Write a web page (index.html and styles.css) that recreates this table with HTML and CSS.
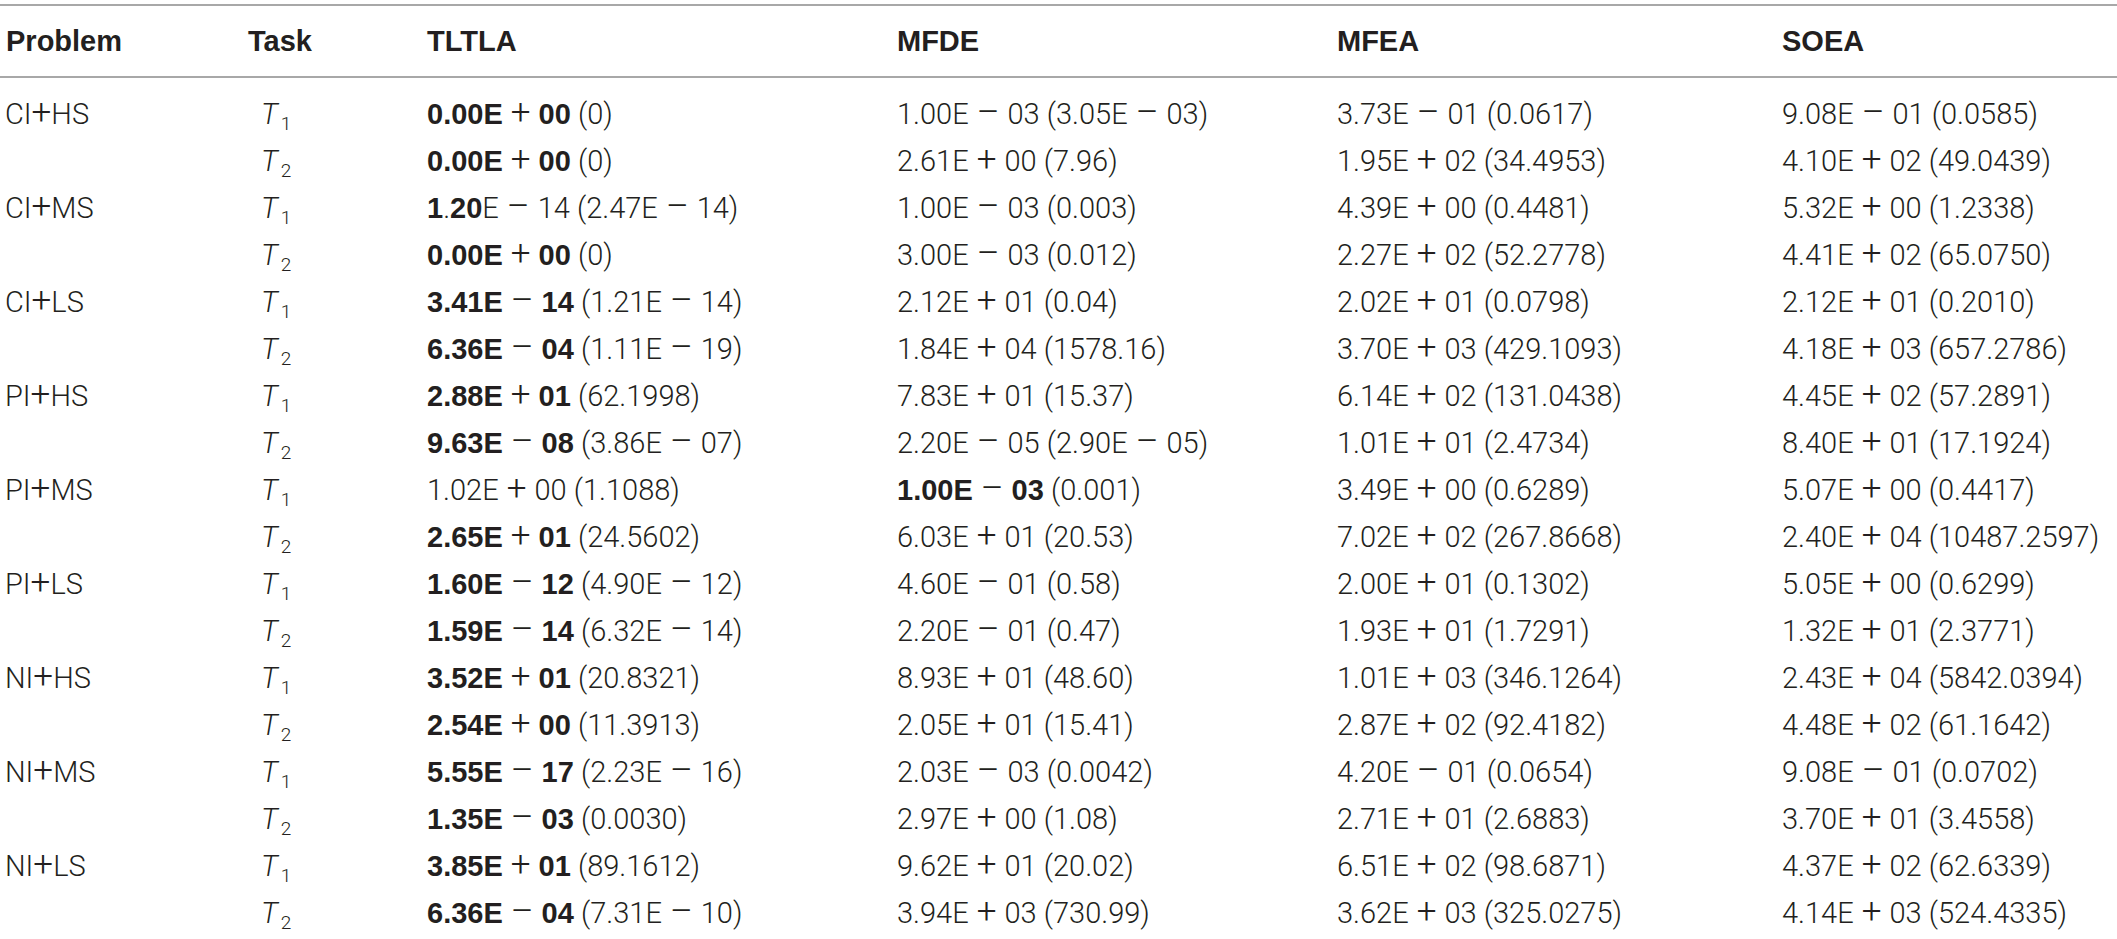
FILE: index.html
```html
<!DOCTYPE html>
<html>
<head>
<meta charset="utf-8">
<link rel="stylesheet" href="styles.css">
</head>
<body>
<table class="results">
<colgroup>
<col class="c-problem"><col class="c-task"><col class="c-tltla"><col class="c-mfde"><col class="c-mfea"><col class="c-soea">
</colgroup>
<thead>
<tr><th class="first">Problem</th><th>Task</th><th>TLTLA</th><th>MFDE</th><th>MFEA</th><th>SOEA</th></tr>
</thead>
<tbody>
<tr class="top">
<td class="first">CI<span class="plus">+</span>HS</td><td class="task"><i>T</i><sub>1</sub></td>
<td><b>0.00E</b><span class="op">+</span><b>00</b> (0)</td>
<td>1.00E<span class="op">–</span>03 (3.05E<span class="op">–</span>03)</td>
<td>3.73E<span class="op">–</span>01 (0.0617)</td>
<td>9.08E<span class="op">–</span>01 (0.0585)</td>
</tr>
<tr>
<td class="first"></td><td class="task"><i>T</i><sub>2</sub></td>
<td><b>0.00E</b><span class="op">+</span><b>00</b> (0)</td>
<td>2.61E<span class="op">+</span>00 (7.96)</td>
<td>1.95E<span class="op">+</span>02 (34.4953)</td>
<td>4.10E<span class="op">+</span>02 (49.0439)</td>
</tr>
<tr>
<td class="first">CI<span class="plus">+</span>MS</td><td class="task"><i>T</i><sub>1</sub></td>
<td><b>1</b>.<b>20</b>E<span class="op">–</span>14 (2.47E<span class="op">–</span>14)</td>
<td>1.00E<span class="op">–</span>03 (0.003)</td>
<td>4.39E<span class="op">+</span>00 (0.4481)</td>
<td>5.32E<span class="op">+</span>00 (1.2338)</td>
</tr>
<tr>
<td class="first"></td><td class="task"><i>T</i><sub>2</sub></td>
<td><b>0.00E</b><span class="op">+</span><b>00</b> (0)</td>
<td>3.00E<span class="op">–</span>03 (0.012)</td>
<td>2.27E<span class="op">+</span>02 (52.2778)</td>
<td>4.41E<span class="op">+</span>02 (65.0750)</td>
</tr>
<tr>
<td class="first">CI<span class="plus">+</span>LS</td><td class="task"><i>T</i><sub>1</sub></td>
<td><b>3.41E</b><span class="op">–</span><b>14</b> (1.21E<span class="op">–</span>14)</td>
<td>2.12E<span class="op">+</span>01 (0.04)</td>
<td>2.02E<span class="op">+</span>01 (0.0798)</td>
<td>2.12E<span class="op">+</span>01 (0.2010)</td>
</tr>
<tr>
<td class="first"></td><td class="task"><i>T</i><sub>2</sub></td>
<td><b>6.36E</b><span class="op">–</span><b>04</b> (1.11E<span class="op">–</span>19)</td>
<td>1.84E<span class="op">+</span>04 (1578.16)</td>
<td>3.70E<span class="op">+</span>03 (429.1093)</td>
<td>4.18E<span class="op">+</span>03 (657.2786)</td>
</tr>
<tr>
<td class="first">PI<span class="plus">+</span>HS</td><td class="task"><i>T</i><sub>1</sub></td>
<td><b>2.88E</b><span class="op">+</span><b>01</b> (62.1998)</td>
<td>7.83E<span class="op">+</span>01 (15.37)</td>
<td>6.14E<span class="op">+</span>02 (131.0438)</td>
<td>4.45E<span class="op">+</span>02 (57.2891)</td>
</tr>
<tr>
<td class="first"></td><td class="task"><i>T</i><sub>2</sub></td>
<td><b>9.63E</b><span class="op">–</span><b>08</b> (3.86E<span class="op">–</span>07)</td>
<td>2.20E<span class="op">–</span>05 (2.90E<span class="op">–</span>05)</td>
<td>1.01E<span class="op">+</span>01 (2.4734)</td>
<td>8.40E<span class="op">+</span>01 (17.1924)</td>
</tr>
<tr>
<td class="first">PI<span class="plus">+</span>MS</td><td class="task"><i>T</i><sub>1</sub></td>
<td>1.02E<span class="op">+</span>00 (1.1088)</td>
<td><b>1.00E</b><span class="op">–</span><b>03</b> (0.001)</td>
<td>3.49E<span class="op">+</span>00 (0.6289)</td>
<td>5.07E<span class="op">+</span>00 (0.4417)</td>
</tr>
<tr>
<td class="first"></td><td class="task"><i>T</i><sub>2</sub></td>
<td><b>2.65E</b><span class="op">+</span><b>01</b> (24.5602)</td>
<td>6.03E<span class="op">+</span>01 (20.53)</td>
<td>7.02E<span class="op">+</span>02 (267.8668)</td>
<td>2.40E<span class="op">+</span>04 (10487.2597)</td>
</tr>
<tr>
<td class="first">PI<span class="plus">+</span>LS</td><td class="task"><i>T</i><sub>1</sub></td>
<td><b>1.60E</b><span class="op">–</span><b>12</b> (4.90E<span class="op">–</span>12)</td>
<td>4.60E<span class="op">–</span>01 (0.58)</td>
<td>2.00E<span class="op">+</span>01 (0.1302)</td>
<td>5.05E<span class="op">+</span>00 (0.6299)</td>
</tr>
<tr>
<td class="first"></td><td class="task"><i>T</i><sub>2</sub></td>
<td><b>1.59E</b><span class="op">–</span><b>14</b> (6.32E<span class="op">–</span>14)</td>
<td>2.20E<span class="op">–</span>01 (0.47)</td>
<td>1.93E<span class="op">+</span>01 (1.7291)</td>
<td>1.32E<span class="op">+</span>01 (2.3771)</td>
</tr>
<tr>
<td class="first">NI<span class="plus">+</span>HS</td><td class="task"><i>T</i><sub>1</sub></td>
<td><b>3.52E</b><span class="op">+</span><b>01</b> (20.8321)</td>
<td>8.93E<span class="op">+</span>01 (48.60)</td>
<td>1.01E<span class="op">+</span>03 (346.1264)</td>
<td>2.43E<span class="op">+</span>04 (5842.0394)</td>
</tr>
<tr>
<td class="first"></td><td class="task"><i>T</i><sub>2</sub></td>
<td><b>2.54E</b><span class="op">+</span><b>00</b> (11.3913)</td>
<td>2.05E<span class="op">+</span>01 (15.41)</td>
<td>2.87E<span class="op">+</span>02 (92.4182)</td>
<td>4.48E<span class="op">+</span>02 (61.1642)</td>
</tr>
<tr>
<td class="first">NI<span class="plus">+</span>MS</td><td class="task"><i>T</i><sub>1</sub></td>
<td><b>5.55E</b><span class="op">–</span><b>17</b> (2.23E<span class="op">–</span>16)</td>
<td>2.03E<span class="op">–</span>03 (0.0042)</td>
<td>4.20E<span class="op">–</span>01 (0.0654)</td>
<td>9.08E<span class="op">–</span>01 (0.0702)</td>
</tr>
<tr>
<td class="first"></td><td class="task"><i>T</i><sub>2</sub></td>
<td><b>1.35E</b><span class="op">–</span><b>03</b> (0.0030)</td>
<td>2.97E<span class="op">+</span>00 (1.08)</td>
<td>2.71E<span class="op">+</span>01 (2.6883)</td>
<td>3.70E<span class="op">+</span>01 (3.4558)</td>
</tr>
<tr>
<td class="first">NI<span class="plus">+</span>LS</td><td class="task"><i>T</i><sub>1</sub></td>
<td><b>3.85E</b><span class="op">+</span><b>01</b> (89.1612)</td>
<td>9.62E<span class="op">+</span>01 (20.02)</td>
<td>6.51E<span class="op">+</span>02 (98.6871)</td>
<td>4.37E<span class="op">+</span>02 (62.6339)</td>
</tr>
<tr>
<td class="first"></td><td class="task"><i>T</i><sub>2</sub></td>
<td><b>6.36E</b><span class="op">–</span><b>04</b> (7.31E<span class="op">–</span>10)</td>
<td>3.94E<span class="op">+</span>03 (730.99)</td>
<td>3.62E<span class="op">+</span>03 (325.0275)</td>
<td>4.14E<span class="op">+</span>03 (524.4335)</td>
</tr>
</tbody>
</table>
</body>
</html>
```

FILE: styles.css
```css
html, body {
  margin: 0;
  padding: 0;
  background: #ffffff;
}

body {
  color: #231f20;
  font-family: Roboto, "Liberation Sans", sans-serif;
  font-weight: 300;
  font-size: 29px;
}

.results {
  width: 2117px;
  margin-top: 4px;
  table-layout: fixed;
  border-collapse: separate;
  border-spacing: 0;
}

.c-problem { width: 248px; }
.c-task { width: 179px; }
.c-tltla { width: 470px; }
.c-mfde { width: 440px; }
.c-mfea { width: 445px; }
.c-soea { width: 335px; }

.results th {
  font-family: "Liberation Sans", Arial, sans-serif;
  font-weight: 700;
  font-size: 29px;
  text-align: left;
  padding: 0;
  line-height: 70px;
  border-top: 2px solid #a8a8a8;
  border-bottom: 2px solid #a8a8a8;
  white-space: nowrap;
}

.results td {
  padding: 0;
  line-height: 47px;
  height: 47px;
  white-space: nowrap;
  vertical-align: top;
}

.results tr.top td {
  padding-top: 13px;
}

.results .first {
  padding-left: 6px;
}

.results td.first {
  padding-left: 5px;
}

.results td.task {
  padding-left: 13px;
}

.results td i {
  font-style: italic;
}

.results td sub {
  font-size: 19px;
  line-height: 0;
  vertical-align: -6px;
  margin-left: 3px;
}

.results td b {
  font-family: "Liberation Sans", Arial, sans-serif;
  font-weight: 700;
}

.op {
  font-size: 35px;
  line-height: 0;
  margin: 0 8px;
}

.plus {
  font-size: 35px;
  line-height: 0;
}
```
